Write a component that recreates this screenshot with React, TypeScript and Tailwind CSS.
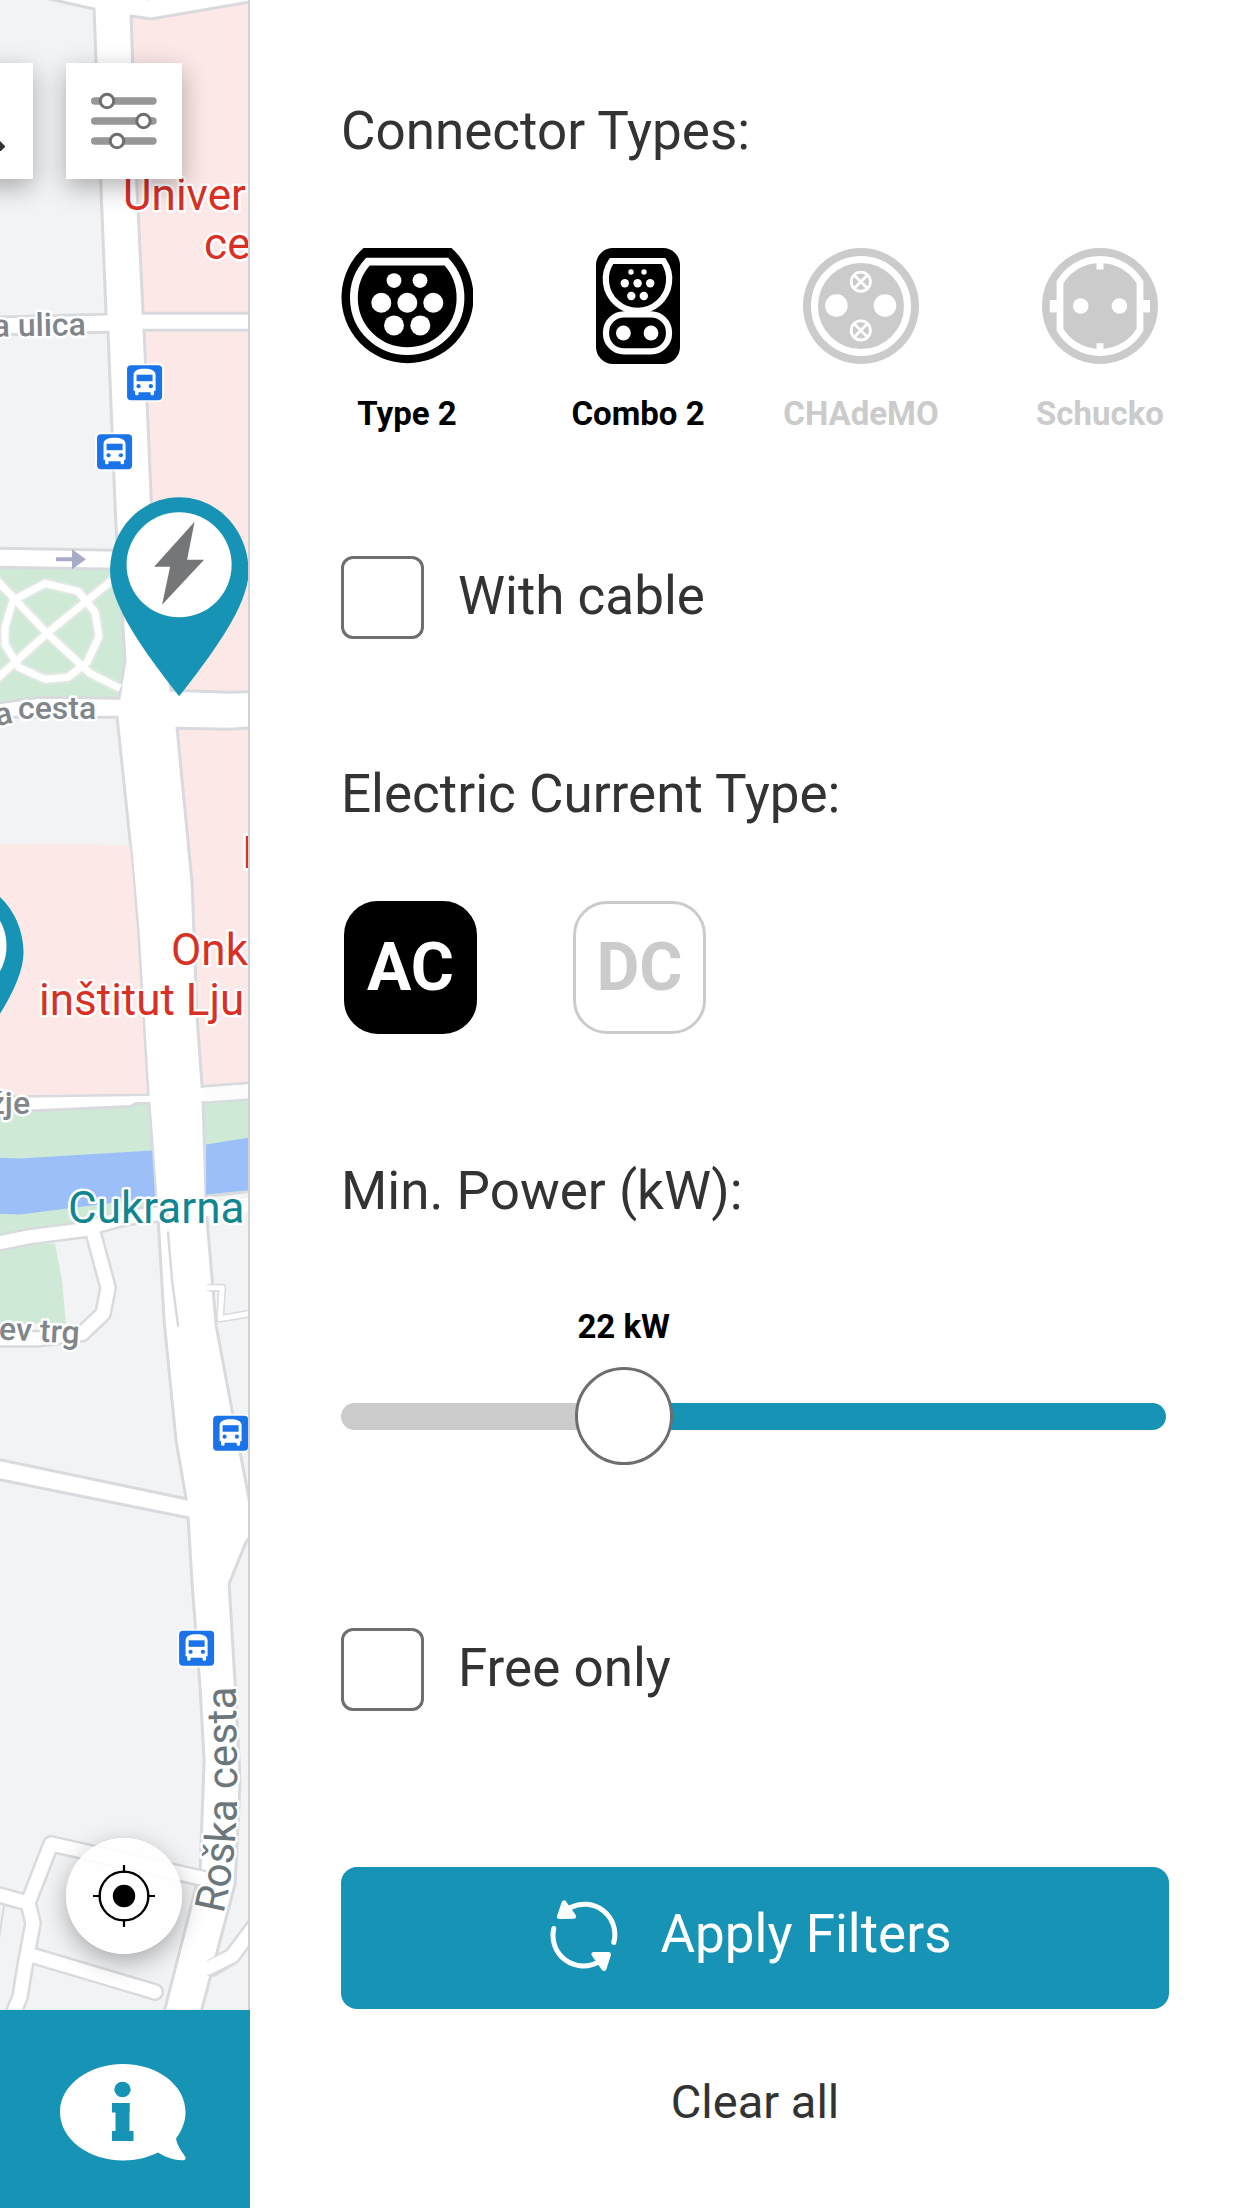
import { useState } from "react";
import type { CSSProperties, ReactNode } from "react";

const MIN_POWER = 4;
const MAX_POWER = 60;

const Type2Icon = () => (
  <svg width="132" height="116" viewBox="0 0 132 116" aria-hidden="true">
    <path d="M22.5 0H110.5A66 66 0 1 1 22.5 0Z" fill="currentColor" />
    <path
      d="M27 13.7H105.4A53.3 53.3 0 1 1 27 13.7Z"
      fill="none"
      stroke="#fff"
      strokeWidth="7.8"
    />
    <g fill="#fff">
      <circle cx="53" cy="32.6" r="7.4" />
      <circle cx="79" cy="32.6" r="7.4" />
      <circle cx="40.3" cy="54.8" r="10" />
      <circle cx="66.3" cy="54.8" r="10" />
      <circle cx="92.3" cy="54.8" r="10" />
      <circle cx="53" cy="77.4" r="10" />
      <circle cx="79.3" cy="77.4" r="10" />
    </g>
  </svg>
);

const Combo2Icon = () => (
  <svg width="84" height="116" viewBox="0 0 84 116" aria-hidden="true">
    <rect width="84" height="116" rx="17" fill="currentColor" />
    <g fill="none" stroke="#fff" strokeWidth="6.2">
      <path d="M15.5 13H67.5A31.7 31.7 0 1 1 15.5 13Z" />
      <rect x="10" y="66.4" width="63" height="37" rx="18" />
    </g>
    <g fill="#fff">
      <circle cx="35" cy="24" r="2.7" />
      <circle cx="48" cy="24" r="2.7" />
      <circle cx="28.8" cy="35.3" r="4.2" />
      <circle cx="41.6" cy="35.3" r="4.2" />
      <circle cx="54.2" cy="35.3" r="4.2" />
      <circle cx="35.3" cy="48" r="4.2" />
      <circle cx="47.8" cy="48" r="4.2" />
      <circle cx="27.4" cy="85" r="7.4" />
      <circle cx="55" cy="85" r="7.4" />
    </g>
  </svg>
);

const ChademoIcon = () => (
  <svg width="116" height="116" viewBox="0 0 116 116" aria-hidden="true">
    <circle cx="58" cy="58" r="58" fill="currentColor" />
    <g fill="none" stroke="#fff">
      <circle cx="58" cy="58" r="46.5" strokeWidth="7" />
      <g strokeWidth="2.8">
        <circle cx="57.8" cy="33.8" r="9.6" />
        <path d="M51.5 27.5l12.6 12.6M64.1 27.5L51.5 40.1" />
        <circle cx="57.8" cy="82.4" r="9.6" />
        <path d="M51.5 76.1l12.6 12.6M64.1 76.1L51.5 88.7" />
      </g>
    </g>
    <circle cx="33.4" cy="57.6" r="11.3" fill="#fff" />
    <circle cx="82" cy="57.6" r="11.3" fill="#fff" />
  </svg>
);

const SchuckoIcon = () => (
  <svg width="116" height="116" viewBox="0 0 116 116" aria-hidden="true">
    <circle cx="58" cy="58" r="58" fill="currentColor" />
    <path
      d="M18 34.3A46.5 46.5 0 0 1 98 34.3V81.7A46.5 46.5 0 0 1 18 81.7Z"
      fill="none"
      stroke="#fff"
      strokeWidth="6.8"
    />
    <g fill="#fff">
      <rect x="54.5" y="10" width="7" height="11.5" />
      <rect x="54.5" y="95.3" width="7" height="11" />
      <rect x="7.8" y="52" width="8" height="12.4" />
      <rect x="100" y="52" width="8" height="12.4" />
      <circle cx="38.7" cy="58" r="7.8" />
      <circle cx="77.4" cy="58" r="7.8" />
    </g>
  </svg>
);

const RefreshIcon = () => (
  <svg width="68" height="76" viewBox="0 0 68 76" aria-hidden="true">
    <g fill="none" stroke="#fff" strokeWidth="5" strokeLinecap="round">
      <path d="M20 9.8A30.4 30.4 0 0 1 63.8 44.5" />
      <path d="M3.8 30.5A30.4 30.4 0 0 0 49 63.6" />
    </g>
    <g fill="#fff" stroke="#fff" strokeWidth="5" strokeLinejoin="round">
      <path d="M14 5L9.5 18.5L23.5 18.3Z" />
      <path d="M44 56.4L58.5 56.4L54 70.5Z" />
    </g>
  </svg>
);

const SlidersIcon = () => (
  <svg width="66" height="58" viewBox="0 0 66 58" aria-hidden="true">
    <g stroke="#979797" strokeWidth="7.4" strokeLinecap="round">
      <path d="M3.7 9H62" />
      <path d="M3.7 29H62" />
      <path d="M3.7 49H62" />
    </g>
    <g fill="#fff" stroke="#6e6e6e" strokeWidth="3">
      <circle cx="16" cy="9" r="6.7" />
      <circle cx="52.5" cy="29" r="6.7" />
      <circle cx="26" cy="49" r="6.7" />
    </g>
  </svg>
);

const LocateIcon = () => (
  <svg width="62" height="62" viewBox="0 0 62 62" aria-hidden="true">
    <circle cx="31" cy="31" r="24.4" fill="none" stroke="#000" strokeWidth="2.4" />
    <path
      d="M31 0V8M31 54V62M0 31H8M54 31H62"
      stroke="#000"
      strokeWidth="2.2"
    />
    <circle cx="31" cy="31" r="11.2" />
  </svg>
);

const InfoIcon = () => (
  <svg width="126" height="98" viewBox="0 0 126 98" aria-hidden="true">
    <path
      d="M63 0C98 0 125.500 21.500 125.500 48C125.500 58 121.800 66.500 116 74.500C117.500 83.500 124 90 125.500 93.500C126 95.500 124.500 96.500 122 96.200C112 95.800 105 92.800 98 88.500C88 93.500 76 96.500 63 96.500C28.500 96.500 0 75 0 48C0 21.500 28.500 0 63 0Z"
      fill="#fff"
    />
    <g fill="#1794b5">
      <ellipse cx="62.500" cy="25.500" rx="8.200" ry="7.700" />
      <rect x="52" y="39" width="17.500" height="9.500" />
      <rect x="55.500" y="39" width="14" height="36" />
      <rect x="52" y="67" width="21.500" height="10" />
    </g>
  </svg>
);

const BusStop = ({ x, y }: { x: number; y: number }) => (
  <g transform={`translate(${x} ${y})`}>
    <rect x="-2" y="-2" width="39" height="39" rx="5" fill="#fff" opacity="0.8" />
    <rect width="35" height="35" rx="4" fill="#1a73e8" />
    <path
      d="M6.500 10C6.500 5 11 3.500 17.500 3.500S28.500 5 28.500 10V25.500H27V28.500Q27 30 25.500 30H25Q23.500 30 23.500 28.500V27H11.500V28.500Q11.500 30 10 30H9.500Q8 30 8 28.500V25.500H6.500Z"
      fill="#fff"
    />
    <rect x="9.500" y="9.500" width="16" height="6.500" fill="#1a73e8" />
    <circle cx="11.500" cy="21" r="2.100" fill="#1a73e8" />
    <circle cx="23.800" cy="21" r="2.100" fill="#1a73e8" />
  </g>
);

const ChargerPin = ({ x, y }: { x: number; y: number }) => (
  <g transform={`translate(${x} ${y})`}>
    <path
      d="M0 0C38 0 69 32 69.500 74C69.500 108 33 157 0 199C-33 157 -69 108 -69 74C-69 32 -38 0 0 0Z"
      fill="#1794b5"
    />
    <circle cy="67.500" r="52.500" fill="#fff" />
    <path
      d="M15.500 24.500L8 62.500H25L-17 107.500L-9 69.500H-25Z"
      fill="#757678"
    />
  </g>
);

// Blocks are drawn over a white ground, so that the gaps between them read as streets
const CityMap = () => (
  <svg
    className="block h-full w-full"
    viewBox="0 0 250 2009"
    preserveAspectRatio="xMinYMin slice"
    fontFamily="Roboto, 'Open Sans', sans-serif"
    aria-label="Map"
    role="img"
  >
    <rect width="250" height="2400" fill="#fff" />
    <g stroke="#d8dade" strokeWidth="3" fill="#f2f3f5">
      <path d="M-5 -5L45 -2L94 9L96 63L101 190L106 314L-5 317Z" />
      <path d="M131 16L151 19L255 1V313H143L137 190Z" fill="#fce8e6" />
      <path d="M-5 335L60 333L108 332L114 480L117 550L-5 548Z" />
      <path d="M144 330H255V691L230 692L171 690L152 520Z" fill="#fce8e6" />
      <path d="M-5 567L116 569L122 610L125 660L119 698L40 697L-5 703Z" fill="#ceead6" />
      <path d="M-5 717H117L131 850L138 930L148 1094L-5 1096Z" />
      <path d="M177 728L230 729L255 727V1082L202 1086L197 1017L192 883Z" fill="#fce8e6" />
      <path d="M203 1102L255 1098V1194L206 1198Z" fill="#ceead6" />
      <path d="M-5 1112L130 1106L136 1103L149 1103L158 1225L-5 1248Z" fill="#ceead6" />
      <path d="M97 1231L120 1224L158 1217L164 1320L176 1440L186 1498L-5 1458V1240Z" />
      <path d="M205 1196L255 1190V1530L232 1410L216 1325Z" />
      <path d="M-5 1478L188 1517L192 1583L200 1687L204 1760L200 1870L163 2015H-5Z" />
      <path d="M255 1530L246 1541L229 1583L235 1683L240 1780L235 1883L200 2015H255Z" />
      <path d="M143 -6L149 -1L160 -6Z" />
    </g>
    <path d="M-5 844L60 843L130 845L137 930L147 1093L-5 1095Z" fill="#fce8e6" />
    <path d="M-5 1157L20 1158L152 1150L155 1197L20 1214L-5 1213Z" fill="#9dbff9" />
    <path d="M206 1144L255 1136V1189L206 1194Z" fill="#9dbff9" />
    <path d="M-5 1245L55 1243L62 1280L66 1323H-5Z" fill="#ceead6" />
    <rect x="204" y="1087" width="50" height="14" fill="#fcfcfc" transform="rotate(-4 204 1087)" />

    {/* Park paths */}
    <g fill="none" strokeLinejoin="round">
      <path
        d="M45 583L78 591L95 612L99 636L87 662L68 677L45 679L19 667L5 644V627L13 600Z M-5 578L47 633L90 673L120 688 M-5 680L47 633L112 580"
        stroke="#e4e8e4"
        strokeWidth="11"
      />
      <path
        d="M45 583L78 591L95 612L99 636L87 662L68 677L45 679L19 667L5 644V627L13 600Z M-5 578L47 633L90 673L120 688 M-5 680L47 633L112 580"
        stroke="#fff"
        strokeWidth="7"
      />
    </g>

    {/* Side streets */}
    <g fill="none" strokeLinejoin="round" strokeLinecap="round">
      <path
        d="M-5 1243L30 1236L92 1228L108 1287L103 1313L82 1333L40 1338H-5 M92 1226L125 1217L160 1213"
        stroke="#d8dade"
        strokeWidth="18"
      />
      <path
        d="M-5 1893L28 1902L51 1843L205 1878 M28 1902L33 1922L25 1965L20 1996L10 2020 M34 1955L155 1991 M212 1967L232 1955L262 1915"
        stroke="#d8dade"
        strokeWidth="18"
      />
      <path d="M4 1905L-3 1950" stroke="#d8dade" strokeWidth="2" />
      <path
        d="M210 1287L222 1287L220 1318L255 1312"
        stroke="#d8dade"
        strokeWidth="8"
      />
      <path
        d="M-5 1243L30 1236L92 1228L108 1287L103 1313L82 1333L40 1338H-5 M92 1226L125 1217L160 1213 M206 1209L250 1204"
        stroke="#fff"
        strokeWidth="13"
      />
      <path
        d="M-5 1893L28 1902L51 1843L205 1878 M28 1902L33 1922L25 1965L20 1996L10 2020 M34 1955L155 1991 M208 1967L232 1955L262 1915"
        stroke="#fff"
        strokeWidth="13"
      />
      <path
        d="M208 1287L222 1287L220 1318L255 1312"
        stroke="#fff"
        strokeWidth="5"
      />
      <path d="M168 1232L172 1280L178 1325" stroke="#d8dade" strokeWidth="2.500" />
    </g>
    <path d="M56 557H72V549L86 559L72 569V561H56Z" fill="#a9acc8" />

    <BusStop x={127} y={365} />
    <BusStop x={97} y={434} />
    <BusStop x={213} y={1415} />
    <BusStop x={179} y={1630} />

    <g
      stroke="#fff"
      strokeWidth="5"
      strokeLinejoin="round"
      paintOrder="stroke"
      fontSize="44"
      fill="#d93025"
    >
      <text x="123" y="210">Univer</text>
      <text x="204" y="259">ce</text>
      <text x="242" y="868">I</text>
      <text x="171" y="965">Onk</text>
      <text x="39" y="1014">inštitut Lju</text>
      <text x="68" y="1222" fill="#12868f">Cukrarna</text>
      <g fill="#80868b" fontSize="32" fontWeight="500">
        <text x="86" y="335" textAnchor="end" transform="rotate(-1 86 335)">
          a ulica
        </text>
        <text x="18" y="719">cesta</text>
        <text x="14" y="722" textAnchor="end" transform="rotate(-14 14 722)">
          a
        </text>
        <text x="30" y="1113" textAnchor="end">žje</text>
        <text x="79" y="1343" textAnchor="end" transform="rotate(3 79 1343)">
          ev trg
        </text>
      </g>
      <path id="roska" d="M223 1913Q237 1860 237 1780L235 1660" fill="none" stroke="none" />
      <text fontSize="42" fill="#6b777b">
        <textPath href="#roska">Roška cesta</textPath>
      </text>
    </g>

    <ChargerPin x={179} y={497} />
    <ChargerPin x={-46} y={878} />
  </svg>
);

const SectionTitle = ({ children }: { children: ReactNode }) => (
  <h2 className="text-[53px] leading-[60px] whitespace-nowrap">{children}</h2>
);

const CheckRow = ({
  label,
  checked,
  onChange,
}: {
  label: string;
  checked: boolean;
  onChange: (value: boolean) => void;
}) => (
  <label className="flex w-fit cursor-pointer items-center gap-[34px]">
    <input
      type="checkbox"
      checked={checked}
      onChange={(e) => onChange(e.target.checked)}
      className="size-[83px] appearance-none rounded-xl border-3 border-[#6e6e6e] bg-white checked:bg-[#1794b5]"
    />
    <span className="pb-1 text-[53px] leading-[60px]">{label}</span>
  </label>
);

const connectors = [
  { id: "type2", label: "Type 2", icon: <Type2Icon />, width: "w-[132px]" },
  { id: "combo2", label: "Combo 2", icon: <Combo2Icon />, width: "w-[132px]" },
  { id: "chademo", label: "CHAdeMO", icon: <ChademoIcon />, width: "w-[116px]" },
  { id: "schucko", label: "Schucko", icon: <SchuckoIcon />, width: "w-[164px]" },
];

const currents = ["AC", "DC"];

export default function App() {
  const [selected, setSelected] = useState(["type2", "combo2"]);
  const [current, setCurrent] = useState("AC");
  const [withCable, setWithCable] = useState(false);
  const [freeOnly, setFreeOnly] = useState(false);
  const [power, setPower] = useState(22);

  const ratio = (power - MIN_POWER) / (MAX_POWER - MIN_POWER);
  const thumbCenter = `calc(49px + (100% - 98px) * ${ratio})`;

  const toggleConnector = (id: string) => {
    setSelected((prev) =>
      prev.includes(id) ? prev.filter((item) => item !== id) : [...prev, id]
    );
  };

  const clearAll = () => {
    setSelected([]);
    setWithCable(false);
    setFreeOnly(false);
    setPower(MIN_POWER);
  };

  return (
    <div className="flex min-h-screen overflow-hidden bg-white font-[Roboto,'Open_Sans',sans-serif] text-[#333]">
      {/* Map column */}
      <div className="flex w-[250px] shrink-0 flex-col">
        <div className="relative grow overflow-hidden border-r-2 border-[#d3d4d6]">
          <div className="absolute inset-0">
            <CityMap />
          </div>
          <button
            aria-label="Search"
            className="absolute top-[63px] -left-[83px] flex size-[116px] items-end justify-end bg-white pr-7 pb-7 shadow-[0_8px_24px_rgba(0,0,0,0.3)]"
          >
            <svg width="40" height="40" viewBox="0 0 40 40" aria-hidden="true">
              <path d="M8 8L38 38" stroke="#333" strokeWidth="7" />
            </svg>
          </button>
          <button
            aria-label="Filters"
            className="absolute top-[63px] left-[66px] flex size-[116px] items-center justify-center bg-white shadow-[0_8px_24px_rgba(0,0,0,0.3)]"
          >
            <SlidersIcon />
          </button>
          <button
            aria-label="My location"
            className="absolute bottom-[56px] left-[66px] flex size-[116px] items-center justify-center rounded-full bg-white/90 shadow-[0_8px_24px_rgba(0,0,0,0.3)]"
          >
            <LocateIcon />
          </button>
        </div>
        <nav className="flex h-[198px] items-center bg-[#1794b5] pl-[60px]">
          <button aria-label="Info" className="pt-2">
            <InfoIcon />
          </button>
        </nav>
      </div>

      {/* Filter panel */}
      <form
        className="min-w-0 grow pt-[101px] pr-[73px] pb-[74px] pl-[91px]"
        onSubmit={(e) => e.preventDefault()}
      >
        <section>
          <SectionTitle>Connector Types:</SectionTitle>
          <div className="mt-[87px] -mr-3 flex gap-[99px]">
            {connectors.map((item) => (
              <button
                key={item.id}
                type="button"
                aria-pressed={selected.includes(item.id)}
                onClick={() => toggleConnector(item.id)}
                className={`flex shrink-0 flex-col items-center gap-[30px] ${item.width} ${
                  selected.includes(item.id) ? "text-black" : "text-[#cbcbcb]"
                }`}
              >
                {item.icon}
                <span className="text-[33px] leading-[40px] font-bold whitespace-nowrap">
                  {item.label}
                </span>
              </button>
            ))}
          </div>
          <div className="mt-[122px]">
            <CheckRow label="With cable" checked={withCable} onChange={setWithCable} />
          </div>
        </section>

        <section className="mt-[125px]">
          <SectionTitle>Electric Current Type:</SectionTitle>
          <div className="mt-[77px] flex gap-24 pl-[3px]">
            {currents.map((item) => (
              <button
                key={item}
                type="button"
                aria-pressed={current === item}
                onClick={() => setCurrent(item)}
                className={`size-[133px] rounded-[34px] border-3 text-[66px] leading-none font-bold ${
                  current === item
                    ? "border-black bg-black text-white"
                    : "border-[#cbcbcb] bg-white text-[#cbcbcb]"
                }`}
              >
                {item}
              </button>
            ))}
          </div>
        </section>

        <section className="mt-[127px]">
          <SectionTitle>Min. Power (kW):</SectionTitle>
          <div className="mt-[86px] mr-[3px]">
            <output
              htmlFor="power"
              className="block w-fit -translate-x-1/2 text-[33px] leading-[40px] font-bold whitespace-nowrap text-black"
              style={{ marginLeft: thumbCenter }}
            >
              {power} kW
            </output>
            <input
              id="power"
              type="range"
              aria-label="Minimum power in kW"
              min={MIN_POWER}
              max={MAX_POWER}
              value={power}
              onChange={(e) => setPower(Number(e.target.value))}
              className="mt-5 block h-[98px] w-full cursor-pointer appearance-none bg-transparent [&::-webkit-slider-runnable-track]:h-[27px] [&::-webkit-slider-runnable-track]:rounded-full [&::-webkit-slider-runnable-track]:[background:var(--track)] [&::-webkit-slider-thumb]:-mt-9 [&::-webkit-slider-thumb]:size-[98px] [&::-webkit-slider-thumb]:appearance-none [&::-webkit-slider-thumb]:rounded-full [&::-webkit-slider-thumb]:border-3 [&::-webkit-slider-thumb]:border-solid [&::-webkit-slider-thumb]:border-[#6e6e6e] [&::-webkit-slider-thumb]:bg-white"
              style={
                {
                  "--track": `linear-gradient(to right, #cbcbcb ${thumbCenter}, #1794b5 ${thumbCenter})`,
                } as CSSProperties
              }
            />
          </div>
          <div className="mt-[163px]">
            <CheckRow label="Free only" checked={freeOnly} onChange={setFreeOnly} />
          </div>
        </section>

        <div className="mt-[156px] flex flex-col items-center">
          <button
            type="submit"
            className="flex h-[142px] w-full items-center justify-center gap-[42px] rounded-2xl bg-[#1794b5] pr-2 pb-1 text-white"
          >
            <RefreshIcon />
            <span className="pb-1 text-[53px] leading-[60px]">Apply Filters</span>
          </button>
          <button
            type="button"
            onClick={clearAll}
            className="mt-[63px] text-[47px] leading-[60px]"
          >
            Clear all
          </button>
        </div>
      </form>
    </div>
  );
}
